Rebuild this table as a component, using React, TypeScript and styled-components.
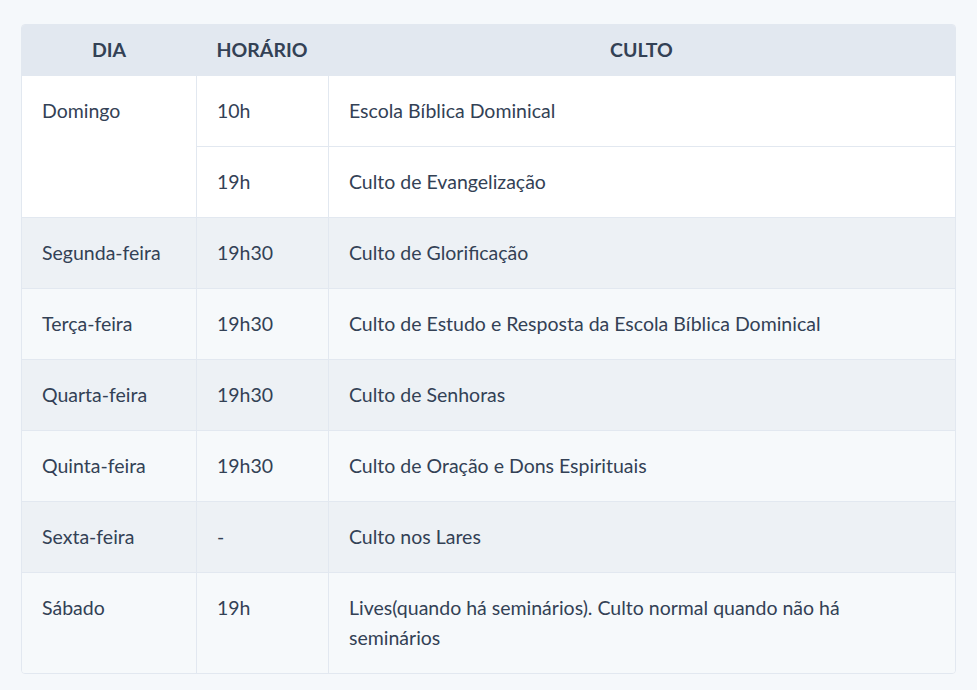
import React from 'react'
import { createGlobalStyle, styled } from 'styled-components'

const GlobalStyle = createGlobalStyle`
  html, body {
    margin: 0;
    background: #f5f8fb;
    font-family: Lato, "Noto Sans", sans-serif;
  }
  *, *::before, *::after {
    box-sizing: border-box;
  }
`

const Page = styled.div`
  padding: 24px 21px;
`

const Table = styled.table`
  width: 100%;
  border-collapse: separate;
  border-spacing: 0;
  border: 1px solid #e2e8f0;
  border-radius: 4px;
  overflow: hidden;
  table-layout: fixed;
  font-size: 19.5px;
  color: #334155;
`

const HeadCell = styled.th<{ width?: number }>`
  background: #e2e8f0;
  font-weight: 700;
  text-transform: uppercase;
  text-align: center;
  padding: 10px 20px;
  line-height: 30px;
  height: 50px;
  width: ${props => (props.width ? `${props.width}px` : 'auto')};
`

const Row = styled.tr<{ tone: 'white' | 'dark' | 'light' }>`
  background: ${props =>
    props.tone === 'white' ? '#ffffff' : props.tone === 'dark' ? '#edf1f5' : '#f6f9fb'};
`

const Cell = styled.td<{ first?: boolean }>`
  padding: 20px 20px;
  line-height: 30px;
  vertical-align: top;
  border-top: 1px solid #e2e8f0;
  border-left: ${props => (props.first ? 'none' : '1px solid #e2e8f0')};
`

interface Schedule {
  day: string
  times: { hour: string; service: string }[]
}

const data: Schedule[] = [
  {
    day: 'Domingo',
    times: [
      { hour: '10h', service: 'Escola Bíblica Dominical' },
      { hour: '19h', service: 'Culto de Evangelização' },
    ],
  },
  { day: 'Segunda-feira', times: [{ hour: '19h30', service: 'Culto de Glorificação' }] },
  {
    day: 'Terça-feira',
    times: [{ hour: '19h30', service: 'Culto de Estudo e Resposta da Escola Bíblica Dominical' }],
  },
  { day: 'Quarta-feira', times: [{ hour: '19h30', service: 'Culto de Senhoras' }] },
  { day: 'Quinta-feira', times: [{ hour: '19h30', service: 'Culto de Oração e Dons Espirituais' }] },
  { day: 'Sexta-feira', times: [{ hour: '-', service: 'Culto nos Lares' }] },
  {
    day: 'Sábado',
    times: [{ hour: '19h', service: 'Lives(quando há seminários). Culto normal quando não há seminários' }],
  },
]

export default function App() {
  return (
    <Page>
      <GlobalStyle />
      <Table>
        <thead>
          <tr>
            <HeadCell width={174}>Dia</HeadCell>
            <HeadCell width={132}>Horário</HeadCell>
            <HeadCell>Culto</HeadCell>
          </tr>
        </thead>
        <tbody>
          {data.map((item, index) => {
            const tone = index === 0 ? 'white' : index % 2 === 1 ? 'dark' : 'light'
            return item.times.map((t, i) => (
              <Row key={`${index}-${i}`} tone={tone}>
                {i === 0 && (
                  <Cell first rowSpan={item.times.length}>
                    {item.day}
                  </Cell>
                )}
                <Cell>{t.hour}</Cell>
                <Cell>{t.service}</Cell>
              </Row>
            ))
          })}
        </tbody>
      </Table>
    </Page>
  )
}
